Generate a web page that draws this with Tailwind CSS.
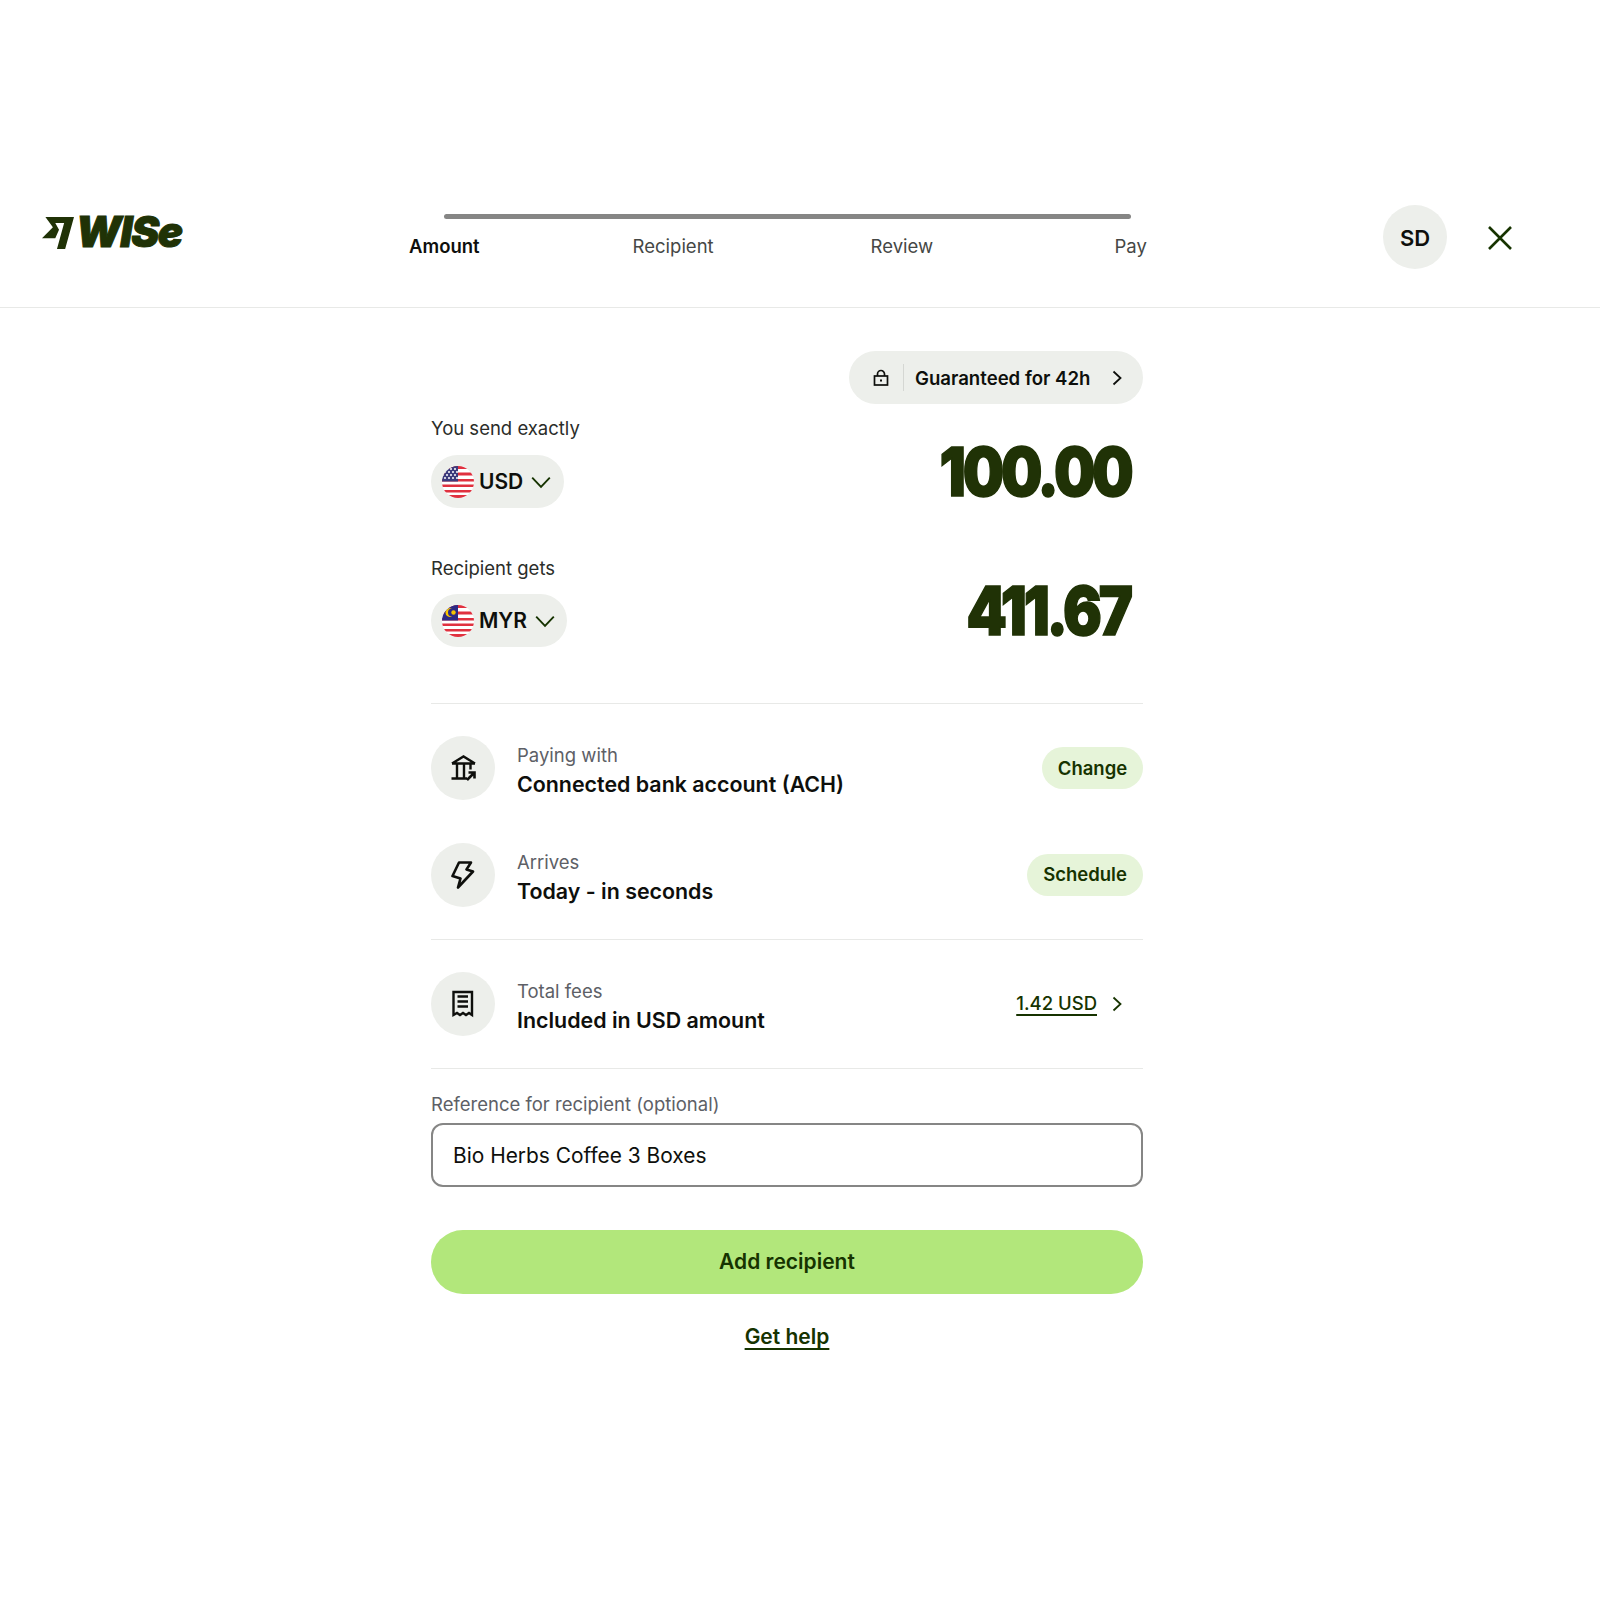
<!DOCTYPE html>
<html lang="en">
<head>
    <meta charset="UTF-8">
    <title>Wise - Send money</title>
    <script src="https://cdn.jsdelivr.net/npm/@tailwindcss/browser@4"></script>
</head>
<body class="bg-white font-['Inter',sans-serif] text-[#0e0f0c]">
    <!-- top bar -->
    <header class="h-[308px] pt-[205px] pl-[42px] flex border-b border-[#e8e9e7]">
        <div class="w-[288px] h-[64px] flex items-start pt-[12px]">
            <svg class="w-[32px] h-[32px]" viewBox="27 40 94 87" preserveAspectRatio="none"><path fill="#203206" d="M37 40H121L95 127H71L92 56.500H66L77 75 66 98H27L59 68Z"/></svg>
            <span class="ml-[2px] -mt-[1px] font-black italic text-[#203206] text-[42px] leading-[32px] tracking-[-0.03em] [-webkit-text-stroke:1px_#203206]">WISe</span>
        </div>
        <div class="w-[915px]">
            <div class="h-[5px] mt-[9px] mx-[114px] rounded-full bg-[#868685]"></div>
            <div class="grid grid-cols-4 mt-[13px] text-[18.5px] leading-[28px] text-center text-[#454745]">
                <span class="font-semibold text-[#0e0f0c]">Amount</span>
                <span>Recipient</span>
                <span>Review</span>
                <span>Pay</span>
            </div>
        </div>
        <div class="ml-[138px] w-[64px] h-[64px] rounded-full bg-[#edefeb] flex items-center justify-center pt-[2px] text-[22px] font-semibold">SD</div>
        <svg class="ml-[37px] mt-[17px] w-[32px] h-[32px]" viewBox="0 0 32 32" fill="none" stroke="#163300" stroke-width="2.600"><path d="M5 5l22 22M27 5L5 27"/></svg>
    </header>

    <div class="w-[1574px]">
        <main class="w-[712px] mx-auto">
            <div class="flex justify-end pt-[43px]">
                <button class="h-[53px] w-[294px] rounded-full bg-[#edefeb] flex items-center pl-[23px] text-[18.6px] font-semibold">
                    <svg class="w-[18px] h-[18px]" viewBox="0 0 18 18" fill="none" stroke="#0e0f0c" stroke-width="1.700"><rect x="2.500" y="7" width="13" height="9"/><path d="M5.500 7V5a3.500 3.500 0 0 1 7 0v2"/><path d="M9 10.500v2" stroke-width="2"/></svg>
                    <span class="ml-[13px] w-px h-[27px] bg-[#d5d7d3]"></span>
                    <span class="ml-[11px] pt-[2px]">Guaranteed for 42h</span>
                    <svg class="ml-[20px] w-[14px] h-[18px]" viewBox="0 0 14 18" fill="none" stroke="#0e0f0c" stroke-width="1.800"><path d="M3.500 2.500l7 6.500-7 6.500"/></svg>
                </button>
            </div>

            <div class="mt-[10px] h-[28px] text-[18.5px] leading-[28px] text-[#2b2d29]">You send exactly</div>
            <div class="flex justify-between mt-[13px] h-[53px]">
                <button class="h-[53px] w-[133px] rounded-full bg-[#edefeb] flex items-center pl-[11px] text-[21px] font-semibold">
                    <svg class="w-[32px] h-[32px]" viewBox="0 0 32 32"><defs><clipPath id="c1"><circle cx="16" cy="16" r="16"/></clipPath></defs><g clip-path="url(#c1)"><rect width="32" height="32" fill="#fff"/><path fill="#e0313f" d="M0 0h32v3H0zM0 6.500h32v3H0zM0 13h32v2.500H0zM0 18.500h32V21H0zM0 24h32v2.500H0zM0 29h32v3H0z"/><rect width="16" height="15.500" fill="#3c3b7c"/><g fill="#fff"><circle cx="5" cy="3" r="1"/><circle cx="9" cy="3" r="1"/><circle cx="13" cy="3" r="1"/><circle cx="3" cy="6" r="1"/><circle cx="7" cy="6" r="1"/><circle cx="11" cy="6" r="1"/><circle cx="15" cy="6" r="1"/><circle cx="1" cy="9" r="1"/><circle cx="5" cy="9" r="1"/><circle cx="9" cy="9" r="1"/><circle cx="13" cy="9" r="1"/><circle cx="3" cy="12" r="1"/><circle cx="7" cy="12" r="1"/><circle cx="11" cy="12" r="1"/><circle cx="15" cy="12" r="1"/></g></g></svg>
                    <span class="ml-[5px]">USD</span>
                    <svg class="ml-[7px] w-[22px] h-[22px]" viewBox="0 0 20 20" fill="none" stroke="#163300" stroke-width="1.700"><path d="M2 6l8 8.500L18 6"/></svg>
                </button>
                <div class="mr-[13px] -mt-[25px] origin-right scale-x-[0.87] text-[#203206] font-black text-[67px] leading-[84px] tracking-[-0.055em] [-webkit-text-stroke:1.500px_#203206]">100.00</div>
            </div>

            <div class="mt-[46px] h-[28px] text-[18.5px] leading-[28px] text-[#2b2d29]">Recipient gets</div>
            <div class="flex justify-between mt-[12px] h-[53px]">
                <button class="h-[53px] w-[136px] rounded-full bg-[#edefeb] flex items-center pl-[11px] text-[21px] font-semibold">
                    <svg class="w-[32px] h-[32px]" viewBox="0 0 32 32"><defs><clipPath id="c2"><circle cx="16" cy="16" r="16"/></clipPath></defs><g clip-path="url(#c2)"><rect width="32" height="32" fill="#fff"/><path fill="#e0313f" d="M0 0h32v3H0zM0 6.500h32v3H0zM0 13h32v2.500H0zM0 18.500h32V21H0zM0 24h32v2.500H0zM0 29h32v3H0z"/><rect width="16" height="15.500" fill="#2d2a85"/><path fill="#f7c600" d="M10 3.500a4.500 4.500 0 1 0 0 8 3.700 3.700 0 1 1 0-8z"/><circle cx="11.500" cy="7.500" r="2.200" fill="#f7c600"/></g></svg>
                    <span class="ml-[5px]">MYR</span>
                    <svg class="ml-[7px] w-[22px] h-[22px]" viewBox="0 0 20 20" fill="none" stroke="#163300" stroke-width="1.700"><path d="M2 6l8 8.500L18 6"/></svg>
                </button>
                <div class="mr-[13px] -mt-[25px] origin-right scale-x-[0.86] text-[#203206] font-black text-[67px] leading-[84px] tracking-[-0.055em] [-webkit-text-stroke:1.500px_#203206]">411.67</div>
            </div>

            <div class="mt-[56px] border-t border-[#e8e9e7]"></div>

            <!-- payment rows -->
            <div class="flex items-center mt-[32px] h-[64px]">
                <div class="w-[64px] h-[64px] rounded-full bg-[#edefeb] flex items-center justify-center">
                    <svg class="w-[28px] h-[28px]" viewBox="0 0 28 28" fill="none" stroke="#0e0f0c" stroke-width="2.400"><path d="M3 9.500L14.500 2.500 26 9.500M3 9.500h23M2.500 24.500H18M8 9.500v15M15 9.500v15M21.500 9.500v6"/><path d="M18 26l7-7M19.500 18.500h6v6" stroke-width="2.600"/></svg>
                </div>
                <div class="ml-[22px] mt-[3px]">
                    <div class="text-[18.5px] leading-[28px] text-[#5d6066]">Paying with</div>
                    <div class="text-[21.4px] leading-[30px] font-semibold">Connected bank account (ACH)</div>
                </div>
                <button class="ml-auto h-[42px] w-[101px] pt-[1px] rounded-full bg-[#e6f4d9] text-[#163300] text-[18.5px] font-semibold">Change</button>
            </div>

            <div class="flex items-center mt-[43px] h-[64px]">
                <div class="w-[64px] h-[64px] rounded-full bg-[#edefeb] flex items-center justify-center">
                    <svg class="w-[28px] h-[28px]" viewBox="0 0 28 28" fill="none" stroke="#0e0f0c" stroke-width="2.600" stroke-linejoin="round"><path d="M10 1.500H22L17.500 8.500 24 10.500 9 26.500 11.500 17.500 3.500 15z"/></svg>
                </div>
                <div class="ml-[22px] mt-[3px]">
                    <div class="text-[18.5px] leading-[28px] text-[#5d6066]">Arrives</div>
                    <div class="text-[21.4px] leading-[30px] font-semibold">Today - in seconds</div>
                </div>
                <button class="ml-auto h-[42px] w-[116px] rounded-full bg-[#e6f4d9] text-[#163300] text-[18.5px] font-semibold">Schedule</button>
            </div>

            <div class="mt-[32px] border-t border-[#e8e9e7]"></div>

            <div class="flex items-center mt-[32px] h-[64px]">
                <div class="w-[64px] h-[64px] rounded-full bg-[#edefeb] flex items-center justify-center">
                    <svg class="w-[28px] h-[28px]" viewBox="0 0 28 28" fill="none" stroke="#0e0f0c" stroke-width="2.400"><path d="M4.500 2h18.500v23l-3-2-3 2-3-2-3 2-3-2-3.500 2z"/><path d="M8.500 6.500h10.500M8.500 11.500h10.500M8.500 16.500h10.500"/></svg>
                </div>
                <div class="ml-[22px] mt-[3px]">
                    <div class="text-[18.5px] leading-[28px] text-[#5d6066]">Total fees</div>
                    <div class="text-[21.4px] leading-[30px] font-semibold">Included in USD amount</div>
                </div>
                <a class="ml-auto text-[18.5px] font-medium text-[#163300] underline underline-offset-4 decoration-2">1.42 USD</a>
                <svg class="ml-[13px] mr-[19px] w-[14px] h-[18px]" viewBox="0 0 14 18" fill="none" stroke="#163300" stroke-width="1.800"><path d="M3.500 2.500l7 6.500-7 6.500"/></svg>
            </div>

            <div class="mt-[32px] border-t border-[#e8e9e7]"></div>

            <label class="block mt-[21px] text-[18.5px] leading-[28px] text-[#5d6066]">Reference for recipient (optional)</label>
            <input class="block mt-[5px] w-full h-[64px] px-[20px] rounded-[12px] border-2 border-[#868685] text-[20.9px] text-[#0e0f0c]" value="Bio Herbs Coffee 3 Boxes">

            <button class="block mt-[43px] w-full h-[64px] rounded-full bg-[#b2e77b] text-[#163300] text-[21px] font-semibold">Add recipient</button>

            <div class="mt-[27px] text-center"><a class="text-[21px] font-semibold text-[#163300] underline underline-offset-4">Get help</a></div>
        </main>
    </div>
</body>
</html>
